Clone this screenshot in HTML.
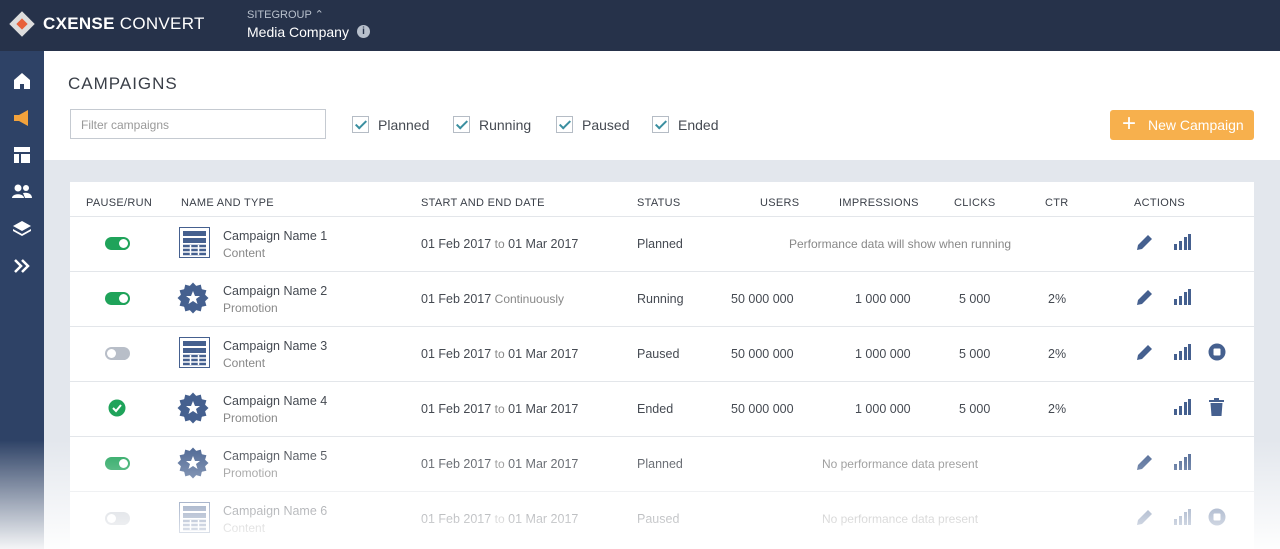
<!DOCTYPE html><html><head><style>
*{margin:0;padding:0;box-sizing:border-box}
body{width:1280px;height:549px;overflow:hidden;font-family:"Liberation Sans",sans-serif;background:#fff;position:relative;color:#3a3f48}
.top{position:absolute;left:0;top:0;width:1280px;height:51px;background:#26324a;color:#fff}
.side{position:absolute;left:0;top:51px;width:44px;height:498px;background:#2e4266}
.gray{position:absolute;left:44px;top:160px;width:1236px;height:389px;background:#e3e7ed}
.card{position:absolute;left:70px;top:182px;width:1184px;height:367px;background:#fff}
.th{position:absolute;top:197px;font-size:11px;color:#3a3f48;letter-spacing:.3px}
.row{position:absolute;left:70px;width:1184px;height:55px;border-top:1px solid #e3e6ea}
.t{position:absolute;font-size:12.5px;color:#454a52}
.s{color:#888;font-size:12px}
.tog{position:absolute;left:105px;width:25px;height:13px;border-radius:7px;background:#1fa35a}
.tog:after{content:"";position:absolute;right:2px;top:2px;width:9px;height:9px;border-radius:50%;background:#fff}
.tog.off{background:#b8bec8}.tog.off:after{left:2px;right:auto}
.cb{position:absolute;top:116px;width:17px;height:17px;border:1px solid #b5bcc5}
.cb:after{content:"";position:absolute;left:5px;top:1px;width:4px;height:9px;border:solid #3a8fa0;border-width:0 2px 2px 0;transform:rotate(45deg)}
.fade{position:absolute;left:0;top:440px;width:1280px;height:109px;background:linear-gradient(rgba(255,255,255,0),rgba(255,255,255,.95))}
</style></head><body>
<div class="top">
<svg style="position:absolute;left:8px;top:10px" width="28" height="28" viewBox="0 0 28 28"><rect x="5" y="5" width="18" height="18" transform="rotate(45 14 14)" fill="#ddd"/><rect x="10" y="10" width="8" height="8" transform="rotate(45 14 14)" fill="#e8603a"/></svg>
<div style="position:absolute;left:43px;top:14px;font-size:17px;letter-spacing:.3px"><b>CXENSE</b> CONVERT</div>
<div style="position:absolute;left:247px;top:8px;font-size:11px;color:#b8c0cc">SITEGROUP ⌃</div>
<div style="position:absolute;left:247px;top:24px;font-size:14px">Media Company</div>
<div style="position:absolute;left:357px;top:25px;width:13px;height:13px;border-radius:50%;background:#b8c0cc;color:#26324a;font-size:10px;font-weight:bold;text-align:center;line-height:13px">i</div>
</div>
<div class="side">
<svg style="position:absolute;left:12px;top:20px" width="20" height="20"><path d="M2 9L10 2 18 9V18H12V13H8V18H2Z" fill="#fff"/></svg>
<svg style="position:absolute;left:12px;top:57px" width="20" height="20"><path d="M2 7H7L16 2V18L7 13H2Z" fill="#f2a23c"/></svg>
<svg style="position:absolute;left:12px;top:94px" width="20" height="20"><path d="M2 2H18V7H2ZM2 9H7V18H2ZM9 9H18V18H9Z" fill="#fff"/></svg>
<svg style="position:absolute;left:11px;top:131px" width="22" height="20"><circle cx="7" cy="6" r="3.5" fill="#fff"/><circle cx="15" cy="6" r="3" fill="#fff"/><path d="M1 16C1 11 13 11 13 16ZM12 11C17 10 21 12 21 16H14Z" fill="#fff"/></svg>
<svg style="position:absolute;left:12px;top:168px" width="20" height="20"><path d="M10 2L19 7 10 12 1 7ZM1 10L10 15 19 10V12L10 17 1 12Z" fill="#fff"/></svg>
<svg style="position:absolute;left:12px;top:205px" width="20" height="20"><path d="M3 4L9 10 3 16M10 4L16 10 10 16" stroke="#fff" stroke-width="2.5" fill="none"/></svg>
</div>
<div style="position:absolute;left:68px;top:74px;font-size:17px;letter-spacing:1px;color:#3a3f48">CAMPAIGNS</div>
<div style="position:absolute;left:70px;top:109px;width:256px;height:30px;border:1px solid #c5cad1;font-size:12px;color:#999;padding:8px 10px">Filter campaigns</div>
<div class="cb" style="left:352px"></div><div class="t" style="left:378px;top:117px;font-size:14px">Planned</div>
<div class="cb" style="left:453px"></div><div class="t" style="left:479px;top:117px;font-size:14px">Running</div>
<div class="cb" style="left:556px"></div><div class="t" style="left:582px;top:117px;font-size:14px">Paused</div>
<div class="cb" style="left:652px"></div><div class="t" style="left:678px;top:117px;font-size:14px">Ended</div>
<div style="position:absolute;left:1110px;top:110px;width:144px;height:30px;background:#f7b04d;border-radius:3px;color:#fff;font-size:14px;line-height:30px;padding-left:38px"><span style="position:absolute;left:12px;top:-1px;font-size:24px;font-weight:lighter">+</span>New Campaign</div>
<div class="gray"></div><div class="card"></div>
<div class="th" style="left:86px">PAUSE/RUN</div><div class="th" style="left:181px">NAME AND TYPE</div><div class="th" style="left:421px">START AND END DATE</div><div class="th" style="left:637px">STATUS</div><div class="th" style="left:760px">USERS</div><div class="th" style="left:839px">IMPRESSIONS</div><div class="th" style="left:954px">CLICKS</div><div class="th" style="left:1045px">CTR</div><div class="th" style="left:1134px">ACTIONS</div>
<div id="rows"></div>
<script>
const R=[["on","c",1,"01 Feb 2017 <span class=s>to</span> 01 Mar 2017","Planned",null,"Performance data will show when running",[1,1,0]],
["on","p",2,"01 Feb 2017 <span class=s>Continuously</span>","Running",1,null,[1,1,0]],
["off","c",3,"01 Feb 2017 <span class=s>to</span> 01 Mar 2017","Paused",1,null,[1,1,2]],
["chk","p",4,"01 Feb 2017 <span class=s>to</span> 01 Mar 2017","Ended",1,null,[0,1,3]],
["on","p",5,"01 Feb 2017 <span class=s>to</span> 01 Mar 2017","Planned",null,"No performance data present",[1,1,0]],
["off","c",6,"01 Feb 2017 <span class=s>to</span> 01 Mar 2017","Paused",null,"No performance data present",[1,1,2]]];
const C="#45608f";let h="";
R.forEach((r,i)=>{const y=216+i*55,c=y+27;
h+=`<div class=row style="top:${y}px"></div>`;
if(r[0]=="chk")h+=`<svg style="position:absolute;left:108px;top:${c-9}px" width=18 height=18><circle cx=9 cy=9 r=8.5 fill="#1fa35a"/><path d="M5 9L8 12 13 6" stroke="#fff" stroke-width=2 fill=none /></svg>`;
else h+=`<div class="tog ${r[0]=='off'?'off':''}" style="top:${c-6}px"></div>`;
if(r[1]=="c")h+=`<svg style="position:absolute;left:179px;top:${c-16}px" width=31 height=31><rect x=.5 y=.5 width=30 height=30 fill="#fff" stroke="${C}"/><rect x=4 y=4 width=23 height=5 fill="${C}"/><rect x=4 y=11 width=23 height=5 fill="${C}"/><path d="M4 19H27M4 23H27M4 27H27" stroke="${C}" stroke-width=2.5 /><path d="M11.5 18V28M19.5 18V28" stroke="#fff" stroke-width=1.5 /></svg>`;
else{let p="";for(let k=0;k<24;k++){const a=k*Math.PI/12,rr=k%2?12.5:15.5;p+=(k?"L":"M")+(16+rr*Math.sin(a)).toFixed(1)+" "+(16-rr*Math.cos(a)).toFixed(1)}
h+=`<svg style="position:absolute;left:177px;top:${c-16}px" width=32 height=32><path d="${p}Z" fill="${C}"/><circle cx=16 cy=16 r=12.5 fill="${C}"/><path d="M16 9L18 14 23 14 19 17 20.5 22 16 19 11.5 22 13 17 9 14 14 14Z" fill="#fff"/></svg>`;}
h+=`<div class=t style="left:223px;top:${c-14}px">Campaign Name ${r[2]}</div><div class="t s" style="left:223px;top:${c+3}px">${r[1]=='c'?'Content':'Promotion'}</div>`;
h+=`<div class=t style="left:421px;top:${c-6}px">${r[3]}</div><div class=t style="left:637px;top:${c-6}px">${r[4]}</div>`;
if(r[5])h+=`<div class=t style="left:731px;top:${c-6}px">50 000 000</div><div class=t style="left:855px;top:${c-6}px">1 000 000</div><div class=t style="left:959px;top:${c-6}px">5 000</div><div class=t style="left:1048px;top:${c-6}px">2%</div>`;
else h+=`<div class="t s" style="left:655px;width:490px;text-align:center;top:${c-6}px">${r[6]}</div>`;
const a=r[7];
if(a[0])h+=`<svg style="position:absolute;left:1136px;top:${c-10}px" width=18 height=18><path d="M1 17L2 12 12 2 16 6 6 16Z" fill="${C}"/></svg>`;
h+=`<svg style="position:absolute;left:1173px;top:${c-10}px" width=18 height=18><path d="M1 11H4V17H1ZM6 8H9V17H6ZM11 4H14V17H11ZM15 1H18V17H15Z" fill="${C}"/></svg>`;
if(a[2]==2)h+=`<svg style="position:absolute;left:1208px;top:${c-10}px" width=18 height=18><circle cx=9 cy=9 r=8.5 fill="${C}"/><rect x=5.5 y=5.5 width=7 height=7 rx=1 fill="#fff"/></svg>`;
if(a[2]==3)h+=`<svg style="position:absolute;left:1209px;top:${c-10}px" width=15 height=18><path d="M0 2H15V4H0ZM5 0H10V2H5ZM1.5 5H13.5L12.5 18H2.5Z" fill="${C}"/></svg>`;
});
document.getElementById("rows").innerHTML=h;
</script>
<div class="fade"></div>
</body></html>
